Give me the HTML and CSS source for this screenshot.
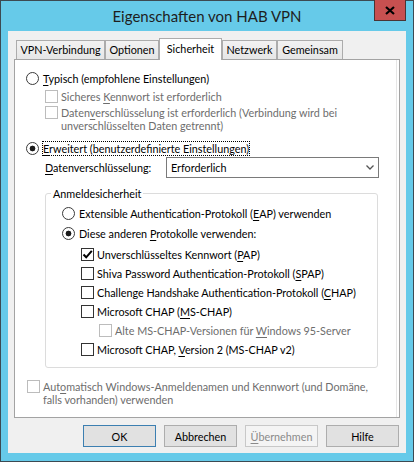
FILE: index.html
```html
<!DOCTYPE html>
<html lang="de">
<head>
    <meta charset="UTF-8">
    <title>Eigenschaften von HAB VPN</title>
    <link rel="stylesheet" href="styles.css">
</head>
<body>
    <div class="window">
        <header class="titlebar">
            <span class="title">Eigenschaften von HAB VPN</span>
            <button class="close" title="Schließen">
                <svg width="10" height="9" viewBox="0 0 10 9"><path d="M1 1 L9 8 M9 1 L1 8" stroke="#000" stroke-width="2.2" fill="none"/></svg>
            </button>
        </header>

        <div class="client">
            <!-- Tab row -->
            <div class="tabs">
                <div class="tab tab-vpn">VPN-Verbindung</div>
                <div class="tab tab-opt">Optionen</div>
                <div class="tab tab-active">Sicherheit</div>
                <div class="tab tab-net">Netzwerk</div>
                <div class="tab tab-share">Gemeinsam</div>
            </div>

            <div class="panel">
                <div class="opt opt-radio">
                    <span class="radio"></span>
                    <span><u>T</u>ypisch (empfohlene Einstellungen)</span>
                </div>
                <div class="sub">
                    <div class="opt disabled opt-first">
                        <span class="check"></span>
                        <span>Sicheres <u>K</u>ennwort ist erforderlich</span>
                    </div>
                    <div class="opt disabled opt-wrap">
                        <span class="check"></span>
                        <span>Daten<u>v</u>erschlüsselung ist erforderlich (Verbindung wird bei<br>unverschlüsselten Daten getrennt)</span>
                    </div>
                </div>

                <div class="opt opt-radio opt-adv">
                    <span class="radio checked"></span>
                    <span class="focus"><u>E</u>rweitert (benutzerdefinierte Einstellungen)</span>
                </div>

                <div class="field-row">
                    <span class="field-label"><u>D</u>atenverschlüsselung:</span>
                    <div class="select">
                        <span>Erforderlich</span>
                        <svg width="8" height="5" viewBox="0 0 8 5"><path d="M0.5 0.5 L4 4 L7.5 0.5" stroke="#555" stroke-width="1.3" fill="none"/></svg>
                    </div>
                </div>

                <fieldset class="group">
                    <legend>Anmeldesicherheit</legend>
                    <div class="group-body">
                        <div class="opt opt-radio">
                            <span class="radio"></span>
                            <span>Extensible Authentication-Protokoll (<u>E</u>AP) verwenden</span>
                        </div>
                        <div class="opt opt-radio opt-others">
                            <span class="radio checked"></span>
                            <span>Diese anderen <u>P</u>rotokolle verwenden:</span>
                        </div>
                        <div class="protocols">
                            <div class="opt opt-pap">
                                <span class="check">
                                    <svg width="11" height="11" viewBox="0 0 11 11"><path d="M1.5 5.5 L4.2 8.3 L9.8 1.8" stroke="#000" stroke-width="2" fill="none"/></svg>
                                </span>
                                <span>Unverschlüsseltes Kennwort (<u>P</u>AP)</span>
                            </div>
                            <div class="opt">
                                <span class="check"></span>
                                <span>Shiva Password Authentication-Protokoll (<u>S</u>PAP)</span>
                            </div>
                            <div class="opt">
                                <span class="check"></span>
                                <span>Challenge Handshake Authentication-Protokoll (<u>C</u>HAP)</span>
                            </div>
                            <div class="opt">
                                <span class="check"></span>
                                <span>Microsoft CHAP (<u>M</u>S-CHAP)</span>
                            </div>
                            <div class="opt disabled opt-legacy">
                                <span class="check"></span>
                                <span>Alte MS-CHAP-Versionen für <u>W</u>indows 95-Server</span>
                            </div>
                            <div class="opt">
                                <span class="check"></span>
                                <span>Microsoft CHAP, <u>V</u>ersion 2 (MS-CHAP v2)</span>
                            </div>
                        </div>
                    </div>
                </fieldset>

                <div class="opt disabled opt-auto">
                    <span class="check"></span>
                    <span>Aut<u>o</u>matisch Windows-Anmeldenamen und Kennwort (und Domäne,<br>falls vorhanden) verwenden</span>
                </div>
            </div>

            <!-- Dialog buttons -->
            <div class="buttons">
                <button class="btn btn-default">OK</button>
                <button class="btn">Abbrechen</button>
                <button class="btn" disabled><u>Ü</u>bernehmen</button>
                <button class="btn">Hilfe</button>
            </div>
        </div>
    </div>
</body>
</html>
```

FILE: styles.css
```css
/* General reset */
body {
    margin: 0;
    font-family: Lato, "Liberation Sans", sans-serif;
    font-size: 10.8px;
    color: #000;
}

u {
    text-decoration-thickness: 1px;
    text-underline-offset: 2px;
}

/* Window frame */
.window {
    width: 414px;
    height: 462px;
    box-sizing: border-box;
    border: 1px solid #3c4a52;
    background-color: #66cae9;
}

.titlebar {
    display: grid;
    grid-template-columns: 1fr auto 1fr;
    align-items: center;
    height: 30px;
}

.title {
    grid-column: 2;
    font-size: 15px;
    color: #1e1e1e;
}

.close {
    grid-column: 3;
    justify-self: end;
    align-self: start;
    width: 32px;
    height: 21px;
    margin: -1px 7px 0 0;
    padding: 0;
    border: 1px solid #4a3434;
    border-top: none;
    background-color: #c75050;
    display: flex;
    align-items: center;
    justify-content: center;
}

/* Client area */
.client {
    height: 422px;
    margin: 0 7px;
    box-sizing: border-box;
    padding: 7px 6px 0;
    background-color: #f0f0f0;
}

/* Tabs */
.tabs {
    display: flex;
    align-items: flex-end;
    height: 21px;
    padding-left: 2px;
}

.tab {
    height: 19px;
    box-sizing: border-box;
    border: 1px solid #acacac;
    border-bottom: none;
    background: linear-gradient(#f2f2f2, #e6e6e6);
    display: flex;
    justify-content: center;
    align-items: center;
    padding-bottom: 1px;
}

.tab-vpn { width: 89px; }
.tab-opt { width: 54px; }
.tab-net { width: 55px; }
.tab-share { width: 66px; }

.tab-active {
    width: 63px;
    height: 22px;
    margin-bottom: -1px;
    background: #fff;
    position: relative;
    z-index: 1;
    padding-bottom: 3px;
}

/* Tab page */
.panel {
    width: 386px;
    height: 359px;
    box-sizing: border-box;
    border: 1px solid #a3a3a3;
    background-color: #fff;
    box-shadow: inset -2px 0 0 #fff, inset -3px 0 0 #e6e6e6;
    padding: 12px 11px 0;
}

.opt {
    display: flex;
    align-items: flex-start;
    gap: 3px;
    line-height: 13px;
}

.opt-radio {
    gap: 4px;
}

.disabled {
    color: #6d6d6d;
}

.check,
.radio {
    flex: none;
    width: 13px;
    height: 13px;
    box-sizing: border-box;
    border: 1px solid #333;
    background-color: #fff;
    display: flex;
    align-items: center;
    justify-content: center;
}

.radio {
    border-radius: 50%;
    border-color: #3a3a3a;
}

.radio.checked {
    background: radial-gradient(circle, #1a1a1a 0 2.6px, #fff 3.2px);
}

.disabled .check {
    border-color: #bcbcbc;
}

.sub {
    margin-left: 19px;
}

.opt-first {
    margin-top: 5px;
}

.opt-wrap {
    margin-top: 3px;
}

.opt-adv {
    margin-top: 10px;
}

.focus {
    outline: 1px dotted #000;
}

/* Encryption dropdown */
.field-row {
    display: flex;
    align-items: center;
    margin: 2px 0 0 19px;
}

.field-label {
    width: 121px;
}

.select {
    width: 213px;
    height: 21px;
    box-sizing: border-box;
    border: 1px solid #7a7a7a;
    display: flex;
    align-items: center;
    justify-content: space-between;
    padding: 0 4px 0 4px;
}

/* Group box */
.group {
    width: 333px;
    box-sizing: border-box;
    margin: 9px 0 0 19px;
    padding: 7px 0 11px 0;
    border: 1px solid #dcdcdc;
    border-radius: 3px;
}

.group legend {
    margin-left: 5px;
    padding: 0 2px;
    line-height: 13px;
}

.group-body {
    padding-left: 16px;
}

.opt-others {
    margin-top: 7px;
}

.protocols {
    margin-left: 19px;
}

.protocols .opt {
    margin-top: 6px;
}

.protocols .opt-pap {
    margin-top: 8px;
}

.protocols .opt-legacy {
    margin-left: 18px;
}

.opt-auto {
    margin: 12px 0 0 1px;
}

/* Buttons */
.buttons {
    display: flex;
    justify-content: flex-end;
    gap: 8px;
    margin-top: 7px;
    padding-right: 1px;
}

.btn {
    width: 73px;
    height: 22px;
    padding: 0;
    border: 1px solid #adadad;
    background-color: #e1e1e1;
    font: inherit;
    color: #000;
}

.btn-default {
    border-color: #3c7fb1;
}

.btn:disabled {
    background-color: #f4f4f4;
    border-color: #c8c8c8;
    color: #8a8a8a;
}
```
